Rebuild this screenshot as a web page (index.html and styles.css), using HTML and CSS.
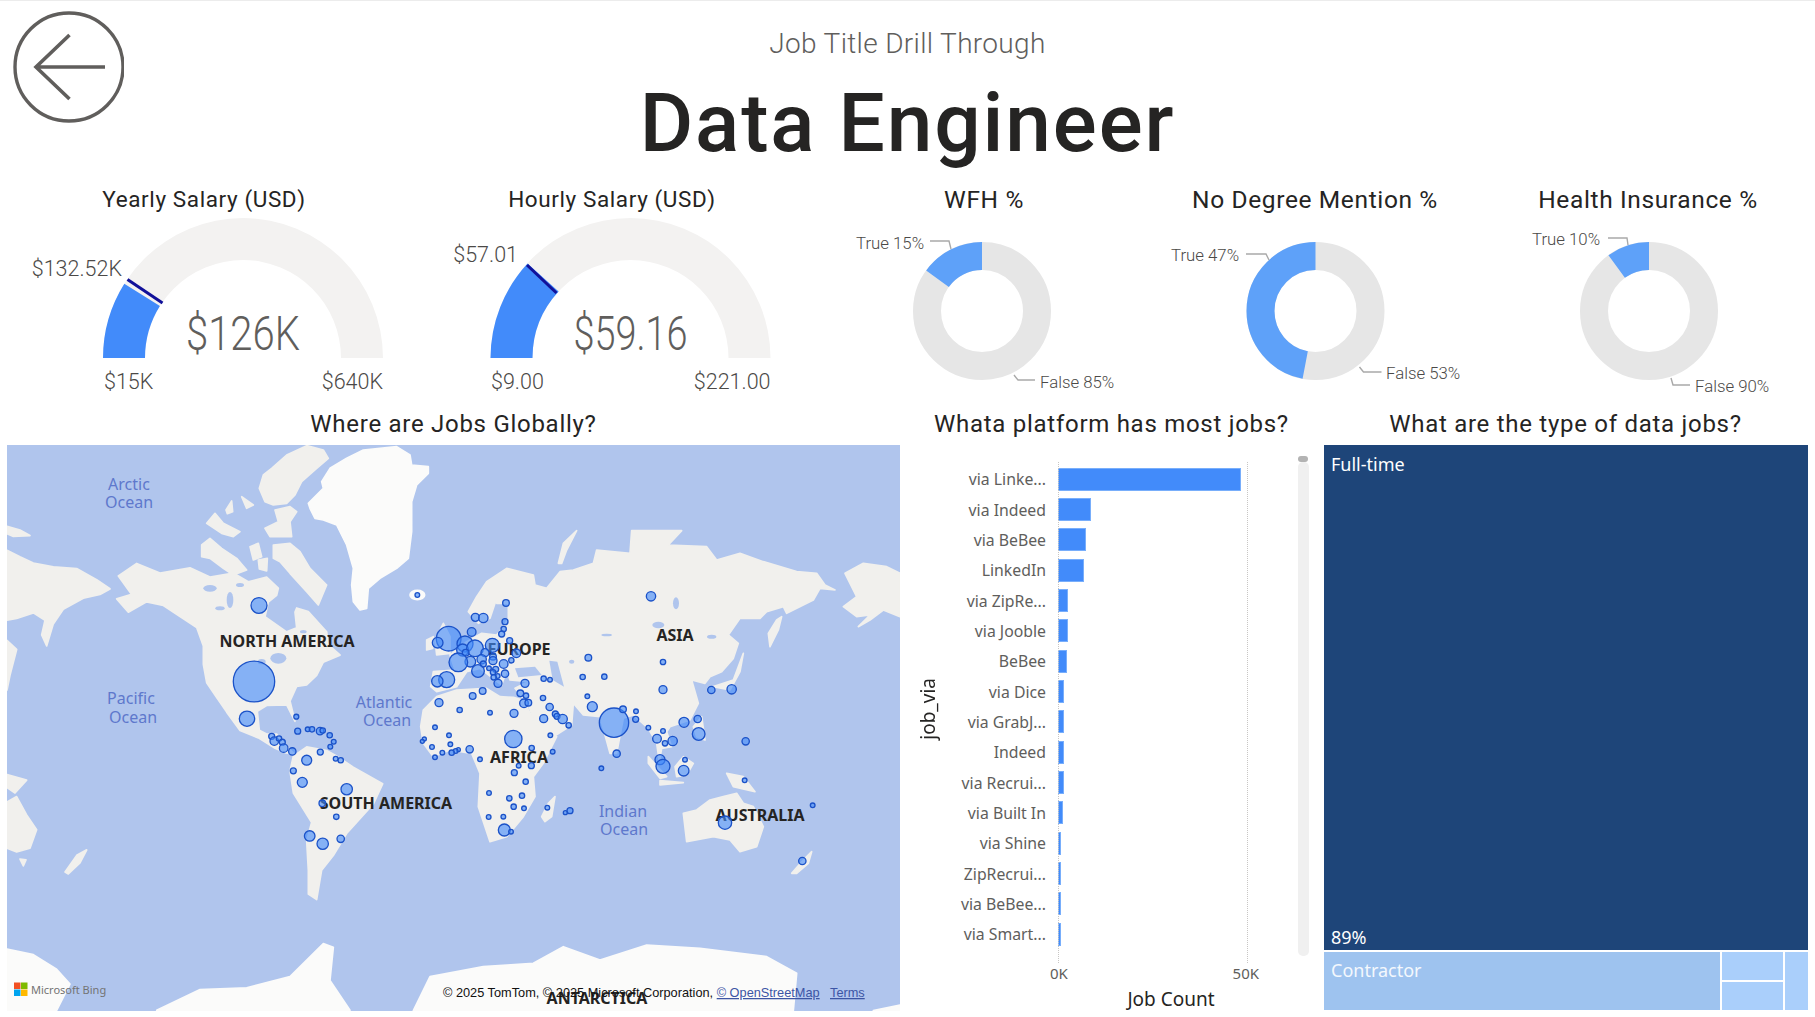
FILE: index.html
```html
<!DOCTYPE html>
<html lang="en">
<head>
<meta charset="utf-8">
<title>Job Title Drill Through</title>
<link rel="stylesheet" href="styles.css">
</head>
<body>
<div class="page">
  <header class="header">
    <svg class="back" viewBox="0 0 124 124" aria-label="Back">
      <circle cx="69" cy="67" r="54"/>
      <path d="M36 67H105M69.5 35L36 67L69.5 99"/>
    </svg>
    <div class="heading">
      <div class="subtitle">Job Title Drill Through</div>
      <h1 class="title">Data Engineer</h1>
    </div>
  </header>

  <section class="kpis">
    <article class="kpi k1">
      <h2 class="kpi-title">Yearly Salary (USD)</h2>
      <svg class="kpi-svg" viewBox="0 218 408 184">
        <path class="g-track" d="M103 358A140 140 0 0 1 383 358H341A98 98 0 0 0 145 358Z"/>
        <path class="g-fill" d="M103 358A140 140 0 0 1 124.3 283.8L159.9 306.1A98 98 0 0 0 145 358Z"/>
        <path class="g-target" d="M127.5 279.5L162.5 303"/>
        <text class="g-value" x="243" y="350" text-anchor="middle" textLength="114" lengthAdjust="spacingAndGlyphs">$126K</text>
        <text class="g-lab" x="104" y="389">$15K</text>
        <text class="g-lab" x="383" y="389" text-anchor="end">$640K</text>
        <text class="g-lab" x="122" y="276" text-anchor="end">$132.52K</text>
      </svg>
    </article>
    <article class="kpi k2">
      <h2 class="kpi-title">Hourly Salary (USD)</h2>
      <svg class="kpi-svg" viewBox="408 218 408 184">
        <path class="g-track" d="M490.5 358A140 140 0 0 1 770.5 358H728.5A98 98 0 0 0 532.5 358Z"/>
        <path class="g-fill" d="M490.5 358A140 140 0 0 1 527.5 263.5L558.6 291.6A98 98 0 0 0 532.5 358Z"/>
        <path class="g-target" d="M527 265L556.5 293"/>
        <text class="g-value" x="630.5" y="350" text-anchor="middle" textLength="114" lengthAdjust="spacingAndGlyphs">$59.16</text>
        <text class="g-lab" x="491" y="389">$9.00</text>
        <text class="g-lab" x="770.5" y="389" text-anchor="end">$221.00</text>
        <text class="g-lab" x="518" y="262" text-anchor="end">$57.01</text>
      </svg>
    </article>
    <article class="kpi k3">
      <h2 class="kpi-title kpi-title-lg">WFH %</h2>
      <svg class="kpi-svg" viewBox="816 218 336 184">
        <circle class="d-false" cx="982" cy="311" r="55"/>
        <circle class="d-true" cx="982" cy="311" r="55" pathLength="100" stroke-dasharray="15 85" transform="rotate(-90 982 311) scale(1 -1) translate(0 -622)"/>
        <path class="d-lead" d="M930 241H949L951 249M1014 375L1018 380H1035"/>
        <text class="d-lab" x="856" y="249">True 15%</text>
        <text class="d-lab" x="1040" y="388">False 85%</text>
      </svg>
    </article>
    <article class="kpi k4">
      <h2 class="kpi-title kpi-title-lg">No Degree Mention %</h2>
      <svg class="kpi-svg" viewBox="1152 218 326 184">
        <circle class="d-false" cx="1315.5" cy="311" r="55"/>
        <circle class="d-true" cx="1315.5" cy="311" r="55" pathLength="100" stroke-dasharray="47 53" transform="rotate(-90 1315.5 311) scale(1 -1) translate(0 -622)"/>
        <path class="d-lead" d="M1246 254H1266L1269 260M1359.5 367L1363.5 372H1381.5"/>
        <text class="d-lab" x="1171" y="261">True 47%</text>
        <text class="d-lab" x="1386" y="379">False 53%</text>
      </svg>
    </article>
    <article class="kpi k5">
      <h2 class="kpi-title kpi-title-lg">Health Insurance %</h2>
      <svg class="kpi-svg" viewBox="1478 218 337 184">
        <circle class="d-false" cx="1649" cy="311" r="55"/>
        <circle class="d-true" cx="1649" cy="311" r="55" pathLength="100" stroke-dasharray="10 90" transform="rotate(-90 1649 311) scale(1 -1) translate(0 -622)"/>
        <path class="d-lead" d="M1608 238H1627L1628 245M1671 378L1673 385H1690"/>
        <text class="d-lab" x="1532" y="245">True 10%</text>
        <text class="d-lab" x="1695" y="392">False 90%</text>
      </svg>
    </article>
  </section>

  <section class="charts">
    <article class="chart map-chart">
      <h2 class="chart-title">Where are Jobs Globally?</h2>
      <svg class="map" viewBox="7 445 893 566">
        <rect class="sea" x="7" y="445" width="893" height="566"/>
        <g class="land" transform="translate(0 440) scale(.33333 .36765)">
          <path d="M21 300L60 318 100 335 160 345 230 350 290 380 330 405 300 420 250 430 190 460 160 500 140 560 125 530 135 490 100 470 50 485 21 490Z"/>
          <path d="M21 235L60 245 90 260 40 262 21 255Z"/>
          <path d="M21 545L50 570 30 640 21 680Z"/>
          <path d="M21 910L80 925 45 960 21 945Z"/>
          <path d="M21 985L50 970 80 1020 110 1060 90 1110 50 1120 21 1110Z"/>
          <path d="M60 1140L78 1142 70 1158Z"/>
          <path d="M195 1175L230 1130 260 1115 240 1150 205 1180Z"/>
          <path d="M355 370L410 336 480 362 570 348 630 373 700 362 745 386 800 373 835 403 830 422 805 441 795 481 860 522 890 511 885 468 890 457 925 467 980 522 985 557 1020 585 970 604 950 640 920 666 890 670 870 710 885 765 860 720 800 722 772 738 778 790 800 800 830 800 865 838 885 855 855 850 825 838 775 810 720 790 680 740 650 700 620 660 610 610 610 560 590 510 540 480 490 450 440 440 385 468 350 432 395 420Z"/>
          <path d="M880 860L920 835 980 845 1010 860 1060 890 1148 935 1120 990 1080 1030 1040 1070 1000 1130 965 1170 950 1250 925 1235 925 1170 920 1090 935 1040 880 960 870 900Z"/>
        </g>
        <g class="land" transform="translate(190 445) scale(.33333)">
          <path d="M245 70L290 30 350 2 400 15 415 40 380 70 335 110 315 150 290 175 250 180 225 170 208 130 220 90Z"/>
          <path d="M255 195L300 185 320 200 300 230 305 275 240 275 225 250 265 230Z"/>
          <path d="M50 235L75 205 100 235 150 260 130 275 95 265Z"/>
          <path d="M108 195L125 168 128 200 112 206Z"/>
          <path d="M155 155L190 180 170 190Z"/>
          <path d="M35 300L60 280 95 310 140 340 170 375 130 390 100 370 60 340 35 335Z"/>
          <path d="M180 305L205 295 215 335 190 345Z"/>
          <path d="M205 345L232 340 230 378 208 372Z"/>
          <path d="M250 300L300 295 330 320 360 370 410 420 385 480 350 440 300 385 270 350 250 340Z"/>
        </g>
        <g class="ice" transform="translate(190 445) scale(.33333)">
          <path d="M355 175L400 130 395 110 420 70 470 40 520 15 620 5 660 30 665 60 715 65 715 85 680 120 665 170 665 260 655 340 620 370 570 400 535 430 530 490 510 495 490 470 485 420 490 370 470 300 440 240 400 225 375 220 360 190Z"/>
          <ellipse cx="682" cy="450" rx="22" ry="14"/>
        </g>
        <g class="ice" transform="translate(0 440) scale(.33333 .36765)">
          <path d="M21 1385L100 1400 170 1440 210 1480 170 1551H21Z"/>
          <path d="M470 1551L600 1495 740 1490 870 1460 970 1370 1000 1380 990 1470 1050 1551Z"/>
        </g>
        <g class="land" transform="translate(400 540) scale(.33333)">
          <path d="M62 560L70 510 110 470 170 450 260 445 300 470 340 472 372 482 395 530 430 600 470 590 430 670 400 710 405 770 370 830 320 890 270 905 235 800 240 700 215 640 150 630 100 650 70 610Z"/>
          <path d="M425 830L445 790 465 770 455 830 435 845Z"/>
          <path d="M92 440L100 395 165 390 150 345 200 305 245 280 290 285 310 260 325 235 325 190 290 190 310 130 285 190 270 235 235 250 205 215 230 170 260 125 320 85 400 105 405 135 440 145 480 95 520 90 580 70 590 30 690 40 695 -28 845 -28 805 15 920 20 950 60 1020 40 1090 65 1190 95 1250 100 1275 135 1305 150 1260 145 1240 180 1160 220 1150 200 1100 215 1080 235 1020 235 985 285 1015 310 1000 355 965 395 930 410 915 430 875 420 895 490 870 540 810 560 800 575 815 620 785 625 778 665 770 610 745 565 700 525 670 535 650 640 630 640 600 530 550 525 520 490 515 555 430 610 415 575 385 495 345 445 385 425 330 420 320 390 305 435 240 385 200 395 170 440 110 455Z"/>
          <path d="M105 300L130 250 150 290 150 340 110 345Z"/>
          <path d="M80 300L100 290 98 325 80 330Z"/>
          <path d="M475 70L490 10 530 -28 500 30 485 70Z"/>
          <path d="M1145 230L1135 270 1110 320 1105 280 1130 240Z"/>
          <path d="M940 440L1000 420 1030 340 1020 395 990 450Z"/>
          <path d="M880 560L905 530 915 600 890 590Z"/>
          <path d="M745 650L800 710 780 715 745 670Z"/>
          <path d="M825 680L850 650 880 670 860 705 830 710Z"/>
          <path d="M780 722L850 728 780 735Z"/>
          <path d="M980 700L1030 710 1065 755 1000 740Z"/>
          <path d="M850 820L890 810 930 780 970 770 1010 760 1030 790 1060 800 1090 860 1070 920 1020 935 990 900 940 890 860 905Z"/>
          <path d="M1175 1000L1210 960 1235 935 1225 970 1190 1000Z"/>
          <path d="M1335 100L1390 70 1460 80 1500 100V230L1450 210 1410 240 1375 260 1410 225 1370 230 1330 200 1370 170Z"/>
        </g>
        <g class="ice" transform="translate(400 540) scale(.33333)">
          <path d="M40 1412L90 1310 250 1280 400 1270 490 1220 600 1260 740 1215 900 1225 1100 1250 1190 1300 1180 1412Z"/>
          <path d="M1420 1412L1500 1395V1412Z"/>
        </g>
        <g class="inland" transform="translate(400 540) scale(.33333)">
          <path d="M345 385L405 380 425 405 355 412Z"/>
          <path d="M448 362L472 365 492 440 458 420Z"/>
          <ellipse cx="515" cy="365" rx="8" ry="6"/>
          <ellipse cx="828" cy="190" rx="9" ry="18"/>
          <ellipse cx="775" cy="255" rx="18" ry="10"/>
          <ellipse cx="935" cy="290" rx="14" ry="6"/>
          <ellipse cx="620" cy="285" rx="16" ry="4"/>
        </g>
        <g class="inland" transform="translate(190 445) scale(.33333)">
          <ellipse cx="60" cy="430" rx="20" ry="10"/>
          <ellipse cx="120" cy="465" rx="10" ry="24"/>
          <ellipse cx="90" cy="490" rx="14" ry="6"/>
          <ellipse cx="150" cy="420" rx="12" ry="6"/>
          <ellipse cx="265" cy="640" rx="24" ry="16"/>
          <ellipse cx="215" cy="650" rx="12" ry="8"/>
          <ellipse cx="340" cy="560" rx="10" ry="5"/>
        </g>
        <g class="ocean">
          <text x="129" y="490">Arctic</text><text x="129" y="508">Ocean</text>
          <text x="131" y="703.5">Pacific</text><text x="133" y="722.5">Ocean</text>
          <text x="384" y="708">Atlantic</text><text x="387" y="726">Ocean</text>
          <text x="623" y="817">Indian</text><text x="624" y="835">Ocean</text>
        </g>
        <g class="continent">
          <text x="287" y="647">NORTH AMERICA</text>
          <text x="675" y="641">ASIA</text>
          <text x="519" y="655">EUROPE</text>
          <text x="519" y="763">AFRICA</text>
          <text x="386" y="809">SOUTH AMERICA</text>
          <text x="760" y="821">AUSTRALIA</text>
          <text x="597" y="1004">ANTARCTICA</text>
        </g>
        <g class="dots" transform="translate(0 440) scale(1 .98824) translate(0 -440)">
          <circle cx="259" cy="607.4" r="8"/><circle cx="254" cy="684.4" r="20.7"/><circle cx="247" cy="722" r="7.7"/>
          <circle cx="296.3" cy="720" r="2.5"/><circle cx="297.7" cy="734.6" r="3"/><circle cx="307.7" cy="732.8" r="2.4"/>
          <circle cx="312" cy="732.8" r="2.7"/><circle cx="320" cy="734.6" r="3.7"/><circle cx="322.7" cy="733.9" r="2.7"/>
          <circle cx="329.7" cy="738.7" r="2.7"/><circle cx="333.7" cy="745.4" r="2.4"/><circle cx="330.3" cy="750.3" r="2.4"/>
          <circle cx="320.3" cy="755.8" r="3"/><circle cx="271.7" cy="739.9" r="3"/><circle cx="274.3" cy="744.7" r="4.3"/>
          <circle cx="279" cy="742.1" r="2.7"/><circle cx="282.3" cy="745.8" r="3"/><circle cx="283.7" cy="751.8" r="4.3"/>
          <circle cx="292.3" cy="755.1" r="3.7"/><circle cx="306.7" cy="764" r="5"/><circle cx="335.7" cy="762.5" r="2.4"/>
          <circle cx="340.7" cy="764" r="2.7"/><circle cx="293.3" cy="774.8" r="3"/><circle cx="302.3" cy="786.4" r="5"/>
          <circle cx="346.7" cy="793.4" r="5.7"/><circle cx="322.3" cy="807.6" r="3.3"/><circle cx="336.3" cy="821.3" r="2.7"/>
          <circle cx="309.7" cy="840.7" r="5.3"/><circle cx="322.7" cy="848.5" r="5.7"/><circle cx="340.7" cy="843.6" r="3.7"/>
        </g>
        <g class="dots dots-z4" transform="translate(400 540) scale(.33333)">
          <circle cx="52" cy="165" r="7"/><circle cx="318" cy="189" r="10"/><circle cx="226" cy="232" r="12"/><circle cx="250" cy="234" r="14"/>
          <circle cx="315" cy="245" r="9"/><circle cx="311" cy="267" r="8"/><circle cx="305" cy="282" r="9"/><circle cx="215" cy="276" r="13"/>
          <circle cx="146" cy="296" r="37"/><circle cx="113" cy="308" r="16"/><circle cx="195" cy="312" r="24"/><circle cx="188" cy="330" r="18"/>
          <circle cx="225" cy="325" r="25"/><circle cx="277" cy="316" r="21"/><circle cx="329" cy="302" r="9"/><circle cx="197" cy="338" r="10"/>
          <circle cx="255" cy="338" r="12"/><circle cx="349" cy="340" r="13"/><circle cx="245" cy="358" r="14"/><circle cx="279" cy="350" r="10"/>
          <circle cx="279" cy="362" r="12"/><circle cx="334" cy="361" r="8"/><circle cx="211" cy="365" r="16"/><circle cx="175" cy="367" r="28"/>
          <circle cx="311" cy="372" r="13"/><circle cx="250" cy="372" r="9"/><circle cx="234" cy="393" r="19"/><circle cx="267" cy="385" r="7"/>
          <circle cx="287" cy="388" r="9"/><circle cx="279" cy="397" r="8"/><circle cx="293" cy="408" r="7"/><circle cx="281" cy="412" r="8"/>
          <circle cx="315" cy="401" r="11"/><circle cx="294" cy="430" r="12"/><circle cx="140" cy="419" r="24"/><circle cx="112" cy="424" r="17"/>
          <circle cx="375" cy="430" r="12"/><circle cx="431" cy="416" r="8"/><circle cx="450" cy="419" r="7"/><circle cx="248" cy="453" r="10"/>
          <circle cx="218" cy="468" r="10"/><circle cx="361" cy="460" r="10"/><circle cx="378" cy="467" r="8"/><circle cx="429" cy="474" r="8"/>
          <circle cx="372" cy="490" r="13"/><circle cx="385" cy="488" r="10"/><circle cx="117" cy="488" r="12"/><circle cx="449" cy="501" r="11"/>
          <circle cx="179" cy="510" r="8"/><circle cx="270" cy="518" r="7"/><circle cx="342" cy="520" r="12"/><circle cx="431" cy="536" r="12"/>
          <circle cx="466" cy="522" r="9"/><circle cx="471" cy="529" r="9"/><circle cx="488" cy="537" r="14"/><circle cx="506" cy="556" r="8"/>
          <circle cx="451" cy="586" r="7"/><circle cx="105" cy="562" r="7"/><circle cx="147" cy="586" r="7"/><circle cx="73" cy="597" r="6"/>
          <circle cx="67" cy="604" r="6"/><circle cx="151" cy="613" r="7"/><circle cx="96" cy="621" r="7"/><circle cx="209" cy="628" r="11"/>
          <circle cx="175" cy="629" r="6"/><circle cx="167" cy="633" r="7"/><circle cx="155" cy="638" r="8"/><circle cx="127" cy="638" r="7"/>
          <circle cx="105" cy="652" r="7"/><circle cx="240" cy="658" r="7"/><circle cx="340" cy="597" r="26"/><circle cx="395" cy="624" r="8"/>
          <circle cx="458" cy="635" r="7"/><circle cx="356" cy="677" r="7"/><circle cx="394" cy="677" r="9"/><circle cx="343" cy="698" r="9"/>
          <circle cx="377" cy="725" r="8"/><circle cx="267" cy="759" r="7"/><circle cx="328" cy="775" r="8"/><circle cx="366" cy="767" r="8"/>
          <circle cx="341" cy="800" r="8"/><circle cx="372" cy="805" r="7"/><circle cx="266" cy="831" r="7"/><circle cx="310" cy="830" r="7"/>
          <circle cx="313" cy="870" r="18"/><circle cx="333" cy="875" r="7"/><circle cx="442" cy="803" r="7"/><circle cx="496" cy="818" r="6"/>
          <circle cx="510" cy="812" r="9"/><circle cx="753" cy="169" r="14"/><circle cx="565" cy="353" r="10"/><circle cx="789" cy="366" r="8"/>
          <circle cx="548" cy="411" r="8"/><circle cx="613" cy="410" r="8"/><circle cx="789" cy="449" r="12"/><circle cx="934" cy="450" r="11"/>
          <circle cx="995" cy="448" r="14"/><circle cx="562" cy="469" r="7"/><circle cx="577" cy="500" r="15"/><circle cx="642" cy="548" r="44"/>
          <circle cx="669" cy="508" r="10"/><circle cx="708" cy="514" r="7"/><circle cx="707" cy="538" r="9"/><circle cx="745" cy="563" r="7"/>
          <circle cx="789" cy="573" r="7"/><circle cx="852" cy="547" r="15"/><circle cx="893" cy="537" r="11"/><circle cx="896" cy="582" r="19"/>
          <circle cx="1037" cy="604" r="11"/><circle cx="771" cy="596" r="13"/><circle cx="795" cy="610" r="8"/><circle cx="818" cy="603" r="14"/>
          <circle cx="650" cy="641" r="11"/><circle cx="604" cy="685" r="7"/><circle cx="780" cy="659" r="15"/><circle cx="789" cy="679" r="21"/>
          <circle cx="855" cy="659" r="7"/><circle cx="851" cy="692" r="16"/><circle cx="1034" cy="721" r="7"/><circle cx="975" cy="848" r="20"/>
          <circle cx="1238" cy="796" r="7"/><circle cx="1207" cy="963" r="11"/>
        </g>
        <g class="ms-logo">
          <rect class="ms-r" x="14" y="982.5" width="6.5" height="6.5"/><rect class="ms-g" x="21" y="982.5" width="6.5" height="6.5"/>
          <rect class="ms-b" x="14" y="989.5" width="6.5" height="6.5"/><rect class="ms-y" x="21" y="989.5" width="6.5" height="6.5"/>
        </g>
        <text class="bing" x="31" y="994">Microsoft Bing</text>
        <text class="attr" x="443" y="997">© 2025 TomTom, © 2025 Microsoft Corporation, <tspan class="attr-link">© OpenStreetMap</tspan></text>
        <text class="attr attr-link" x="830" y="997">Terms</text>
      </svg>
    </article>

    <article class="chart bar-chart">
      <h2 class="chart-title">Whata platform has most jobs?</h2>
      <div class="bar-body">
        <div class="y-title"><span>job_via</span></div>
        <div class="plot">
          <div class="rows">
            <i class="grid-line g0"></i><i class="grid-line g50"></i>
            <div class="row"><span class="lab">via Linke...</span><span class="bar" style="width:183px"></span></div>
            <div class="row"><span class="lab">via Indeed</span><span class="bar" style="width:32.7px"></span></div>
            <div class="row"><span class="lab">via BeBee</span><span class="bar" style="width:27.3px"></span></div>
            <div class="row"><span class="lab">LinkedIn</span><span class="bar" style="width:25.3px"></span></div>
            <div class="row"><span class="lab">via ZipRe...</span><span class="bar" style="width:9.7px"></span></div>
            <div class="row"><span class="lab">via Jooble</span><span class="bar" style="width:9.3px"></span></div>
            <div class="row"><span class="lab">BeBee</span><span class="bar" style="width:8.7px"></span></div>
            <div class="row"><span class="lab">via Dice</span><span class="bar" style="width:5.7px"></span></div>
            <div class="row"><span class="lab">via GrabJ...</span><span class="bar" style="width:5.7px"></span></div>
            <div class="row"><span class="lab">Indeed</span><span class="bar" style="width:5.7px"></span></div>
            <div class="row"><span class="lab">via Recrui...</span><span class="bar" style="width:5.3px"></span></div>
            <div class="row"><span class="lab">via Built In</span><span class="bar" style="width:4.3px"></span></div>
            <div class="row"><span class="lab">via Shine</span><span class="bar" style="width:3px"></span></div>
            <div class="row"><span class="lab">ZipRecrui...</span><span class="bar" style="width:3px"></span></div>
            <div class="row"><span class="lab">via BeBee...</span><span class="bar" style="width:3px"></span></div>
            <div class="row"><span class="lab">via Smart...</span><span class="bar" style="width:2.7px"></span></div>
          </div>
          <div class="x-axis"><span>0K</span><span>50K</span></div>
          <div class="x-title">Job Count</div>
        </div>
        <div class="scroll"><i class="thumb"></i><i class="track"></i></div>
      </div>
    </article>

    <article class="chart tree-chart">
      <h2 class="chart-title">What are the type of data jobs?</h2>
      <div class="tree">
        <div class="tm-full"><span>Full-time</span><span>89%</span></div>
        <div class="tm-rest">
          <div class="tm-contract">Contractor</div>
          <div class="tm-mid"><i></i><i></i></div>
          <div class="tm-last"></div>
        </div>
      </div>
    </article>
  </section>
</div>
</body>
</html>
```
FILE: styles.css
```css
* { box-sizing: border-box; }
html, body { margin: 0; padding: 0; background: #fff; }
body { width: 1815px; height: 1017px; overflow: hidden; font-family: Roboto, "Liberation Sans", sans-serif; }
h1, h2 { margin: 0; font-weight: 400; }

.page { width: 1815px; height: 1017px; display: flex; flex-direction: column; border-top: 1px solid #ececec; }

.header { height: 179px; flex: none; display: grid; grid-template-columns: 124px 1fr 124px; }
.back { width: 124px; height: 124px; margin-top: -1px; fill: none; stroke: #605e5c; }
.back circle { stroke-width: 3.4; }
.back path { stroke-width: 3.6; }
.heading { text-align: center; padding-top: 25px; }
.subtitle { font-size: 28px; line-height: 36px; color: #605e5c; letter-spacing: .33px; font-weight: 300; }
.title { font-size: 82px; line-height: 98px; margin-top: 12px; color: #252423; font-weight: 500; letter-spacing: 1.85px; }

.kpis { display: grid; grid-template-columns: 408px 408px 336px 326px 337px; height: 225px; flex: none; }
.kpi { min-width: 0; }
.kpi-title { height: 38px; text-align: center; font-size: 22.5px; line-height: 38px; color: #252423; letter-spacing: .6px; }
.kpi-title-lg { font-size: 24.5px; line-height: 40px; letter-spacing: .63px; }
.k5 .kpi-title { padding-left: 3px; }
.kpi-svg { display: block; width: 100%; height: 184px; }
.g-track { fill: #f3f2f1; }
.g-fill { fill: #428bfa; }
.g-target { stroke: #11119a; stroke-width: 3; fill: none; }
.g-value { font-size: 48px; font-weight: 300; fill: #605e5c; }
.g-lab { font-size: 21.5px; font-weight: 300; fill: #4b4947; }
.d-false, .d-true { fill: none; stroke-width: 28; }
.d-false { stroke: #e6e6e6; }
.d-true { stroke: #5ea1f9; }
.d-lead { fill: none; stroke: #a9a9a9; stroke-width: 1.4; }
.d-lab { font-size: 16.8px; font-weight: 300; fill: #4b4947; }

.charts { display: grid; grid-template-columns: 7px 893px 423px 485px 7px; grid-template-rows: 612px; height: 612px; }
.chart { display: flex; flex-direction: column; min-width: 0; }
.map-chart { grid-column: 2; }
.bar-chart { grid-column: 3; }
.tree-chart { grid-column: 4; }
.chart-title { height: 40px; flex: none; text-align: center; font-size: 24px; line-height: 38px; color: #252423; letter-spacing: .72px; }

.map { display: block; width: 893px; height: 566px; }
.sea { fill: #b0c5ed; }
.land { fill: #f1f0ed; stroke: #f1f0ed; stroke-width: 5; stroke-linejoin: round; filter: blur(.5px); }
.ice { fill: #fbfbfa; stroke: #fbfbfa; stroke-width: 5; stroke-linejoin: round; filter: blur(.5px); }
.inland { fill: #b0c5ed; filter: blur(.5px); }
.ocean text { font: 400 16px "Noto Sans", sans-serif; fill: #5e78cc; text-anchor: middle; }
.continent text { font: 700 16px "Noto Sans", sans-serif; fill: #252423; text-anchor: middle; }
.dots circle { fill: rgba(66, 139, 250, .62); stroke: #1b52c8; stroke-width: 1.3; }
.dots-z4 circle { stroke-width: 4; }
.ms-r { fill: #f25022; } .ms-g { fill: #7fba00; } .ms-b { fill: #00a4ef; } .ms-y { fill: #ffb900; }
.bing { font: 400 11px "Noto Sans", sans-serif; fill: #737373; }
.attr { font: 400 12.75px "Liberation Sans", sans-serif; fill: #111; }
.attr-link { fill: #3c55a5; text-decoration: underline; }

.bar-body { flex: 1; display: grid; grid-template-columns: 56px 342px 11px 14px; min-height: 0; }
.y-title { display: flex; align-items: center; justify-content: center; padding-bottom: 45px; }
.y-title span { writing-mode: vertical-rl; transform: rotate(180deg); font: 400 19px "Noto Sans", sans-serif; color: #252423; }
.plot { display: flex; flex-direction: column; }
.rows { position: relative; height: 518px; padding-top: 19px; display: flex; flex-direction: column; }
.row { height: 30.35px; flex: none; display: flex; align-items: center; }
.lab { width: 90px; margin-right: 12.3px; flex: none; text-align: right; white-space: nowrap; font: 400 15.8px "Noto Sans", sans-serif; color: #605e5c; }
.bar { height: 23px; background: #428bfa; border: 1px solid #78aefb; }
.grid-line { position: absolute; top: 17px; bottom: 0; width: 0; border-left: 1px dotted #c8c6c4; }
.g0 { left: 102px; }
.g50 { left: 290.5px; }
.x-axis { height: 20px; margin-left: 102px; width: 189px; display: flex; justify-content: space-between; font: 400 15px "Noto Sans", sans-serif; line-height: 20px; color: #605e5c; }
.x-axis span:first-child { margin-left: -8px; }
.x-axis span:last-child { margin-right: -12px; }
.x-title { margin-top: 5px; margin-left: 102px; margin-right: 14px; text-align: center; font: 400 19px "Noto Sans", sans-serif; line-height: 22px; color: #252423; }
.scroll { display: flex; flex-direction: column; padding-top: 11px; }
.thumb { height: 6px; width: 10px; flex: none; background: #b3b3b3; border-radius: 3px; }
.track { height: 494px; width: 11px; flex: none; background: #f0f0f0; border-radius: 5px; }

.tree { flex: 1; display: flex; flex-direction: column; gap: 2px; margin-left: 1px; padding-bottom: 7px; min-height: 0; }
.tm-full { flex: 1; background: #1e4579; color: #fff; display: flex; flex-direction: column; justify-content: space-between; padding: 7px 7px 1px; font: 400 18px/24px "Noto Sans", sans-serif; }
.tm-rest { height: 58px; flex: none; display: flex; gap: 2px; }
.tm-contract { width: 396px; background: #9ec3ef; color: #f4f8fd; padding: 6px 7px; font: 400 18px/24px "Noto Sans", sans-serif; }
.tm-mid { width: 61px; display: flex; flex-direction: column; gap: 2px; }
.tm-mid i { flex: 1; background: #aacffb; }
.tm-last { flex: 1; background: #aacffb; }
```
